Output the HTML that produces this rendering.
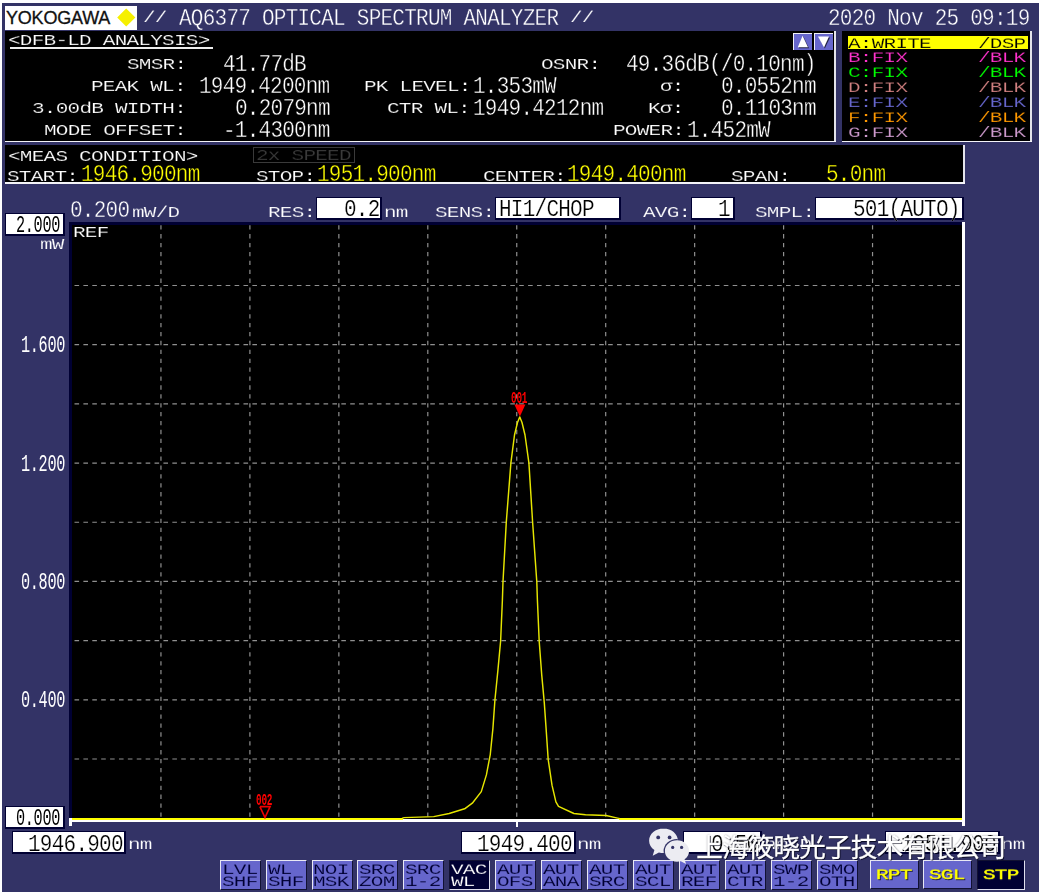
<!DOCTYPE html>
<html><head><meta charset="utf-8"><title>AQ6377 OPTICAL SPECTRUM ANALYZER</title>
<style>
html,body{margin:0;padding:0;background:#fff;}
#page{position:relative;width:1042px;height:894px;overflow:hidden;background:#fff;font-family:"Liberation Mono",monospace;}
#scr{position:absolute;left:2px;top:3px;width:1037px;height:889px;background:#333366;}
.t{will-change:transform;position:absolute;white-space:pre;line-height:1;font-family:"Liberation Mono",monospace;transform-origin:0 76%;}
.r{position:absolute;}
.bx{position:absolute;box-sizing:border-box;background:#fff;border-style:solid;border-color:#000033;border-width:1.3px 2px 2.4px 1.3px;}
.btn{position:absolute;box-sizing:border-box;background:#6666cc;border-style:solid;border-width:1.5px;border-color:#e8e8f4 #111133 #111133 #e8e8f4;}
.btn.on{background:#000033;border-color:#111133 #e0e0ee #e0e0ee #111133;}
svg{position:absolute;left:0;top:0;}
#wm{position:absolute;white-space:nowrap;font-family:"Liberation Sans","Noto Sans CJK SC",sans-serif;color:#fff;line-height:1;}
#logo{position:absolute;white-space:nowrap;font-family:"Liberation Sans",sans-serif;color:#111;line-height:1;}
</style></head><body>
<div id="page"><div id="scr"></div>
<div class="r" style="left:5px;top:5.5px;width:132px;height:24.0px;background:#fff;"></div>
<div id="logo" style="left:6.0px;top:9.4px;font-size:18px;letter-spacing:-0.2px;transform:scaleY(1.07);transform-origin:0 84.6%;-webkit-text-stroke:0.3px #111;">YOKOGAWA</div>
<svg width="1042" height="894" viewBox="0 0 1042 894"><polygon points="117.2,17.5 126.2,8.6 135.4,17.5 126.2,26.4" fill="#f6f000"/></svg>
<span class="t" style="left:143.22px;top:6.34px;font-size:21.00px;letter-spacing:-0.750px;transform:scaleY(0.7648);color:#fff;-webkit-text-stroke:0.2px #333366;">//</span>
<span class="t" style="left:178.77px;top:9.04px;font-size:21.00px;letter-spacing:-0.750px;transform:scaleY(1.1544);color:#fff;-webkit-text-stroke:0.35px #333366;">AQ6377 OPTICAL SPECTRUM ANALYZER</span>
<span class="t" style="left:569.82px;top:6.34px;font-size:21.00px;letter-spacing:-0.750px;transform:scaleY(0.7648);color:#fff;-webkit-text-stroke:0.2px #333366;">//</span>
<span class="t" style="left:828.42px;top:9.04px;font-size:21.00px;letter-spacing:-0.750px;transform:scaleY(1.1544);color:#fff;-webkit-text-stroke:0.35px #333366;">2020 Nov 25 09:19</span>
<div class="r" style="left:5px;top:31.1px;width:829.3px;height:109.70000000000002px;background:#000;"></div>
<div class="r" style="left:834.3px;top:31.1px;width:1.7000000000000455px;height:111.20000000000002px;background:#e4e4ea;"></div>
<div class="r" style="left:5px;top:140.8px;width:831px;height:1.5px;background:#f4f4f8;"></div>
<span class="t" style="left:7.97px;top:29.04px;font-size:21.00px;letter-spacing:-0.750px;transform:scaleY(0.7648);color:#fff;-webkit-text-stroke:0.2px #000;">&lt;DFB-LD ANALYSIS&gt;</span>
<div class="r" style="left:9.5px;top:47.1px;width:203.5px;height:1.6000000000000014px;background:#eeeeee;"></div>
<span class="t" style="left:126.78px;top:53.04px;font-size:21.00px;letter-spacing:-0.750px;transform:scaleY(0.7648);color:#fff;-webkit-text-stroke:0.2px #000;">SMSR:</span>
<span class="t" style="left:91.23px;top:75.14px;font-size:21.00px;letter-spacing:-0.750px;transform:scaleY(0.7648);color:#fff;-webkit-text-stroke:0.2px #000;">PEAK WL:</span>
<span class="t" style="left:31.98px;top:97.24px;font-size:21.00px;letter-spacing:-0.750px;transform:scaleY(0.7648);color:#fff;-webkit-text-stroke:0.2px #000;">3.00dB WIDTH:</span>
<span class="t" style="left:43.83px;top:119.34px;font-size:21.00px;letter-spacing:-0.750px;transform:scaleY(0.7648);color:#fff;-webkit-text-stroke:0.2px #000;">MODE OFFSET:</span>
<span class="t" style="left:223.07px;top:54.54px;font-size:21.00px;letter-spacing:-0.750px;transform:scaleY(1.1544);color:#fff;-webkit-text-stroke:0.35px #000;">41.77dB</span>
<span class="t" style="left:199.38px;top:76.64px;font-size:21.00px;letter-spacing:-0.750px;transform:scaleY(1.1544);color:#fff;-webkit-text-stroke:0.35px #000;">1949.4200nm</span>
<span class="t" style="left:234.93px;top:98.74px;font-size:21.00px;letter-spacing:-0.750px;transform:scaleY(1.1544);color:#fff;-webkit-text-stroke:0.35px #000;">0.2079nm</span>
<span class="t" style="left:223.07px;top:120.84px;font-size:21.00px;letter-spacing:-0.750px;transform:scaleY(1.1544);color:#fff;-webkit-text-stroke:0.35px #000;">-1.4300nm</span>
<span class="t" style="left:363.58px;top:75.14px;font-size:21.00px;letter-spacing:-0.750px;transform:scaleY(0.7648);color:#fff;-webkit-text-stroke:0.2px #000;">PK LEVEL:</span>
<span class="t" style="left:387.28px;top:97.24px;font-size:21.00px;letter-spacing:-0.750px;transform:scaleY(0.7648);color:#fff;-webkit-text-stroke:0.2px #000;">CTR WL:</span>
<span class="t" style="left:472.62px;top:76.64px;font-size:21.00px;letter-spacing:-0.750px;transform:scaleY(1.1544);color:#fff;-webkit-text-stroke:0.35px #000;">1.353mW</span>
<span class="t" style="left:472.62px;top:98.74px;font-size:21.00px;letter-spacing:-0.750px;transform:scaleY(1.1544);color:#fff;-webkit-text-stroke:0.35px #000;">1949.4212nm</span>
<span class="t" style="left:541.23px;top:53.04px;font-size:21.00px;letter-spacing:-0.750px;transform:scaleY(0.7648);color:#fff;-webkit-text-stroke:0.2px #000;">OSNR:</span>
<span class="t" style="left:626.23px;top:54.54px;font-size:21.00px;letter-spacing:-0.750px;transform:scaleY(1.1544);color:#fff;-webkit-text-stroke:0.35px #000;">49.36dB(/0.10nm)</span>
<span class="t" style="left:660.02px;top:75.14px;font-size:21.00px;letter-spacing:-0.750px;transform:scaleY(0.7648);color:#fff;-webkit-text-stroke:0.2px #000;">σ:</span>
<span class="t" style="left:648.18px;top:97.24px;font-size:21.00px;letter-spacing:-0.750px;transform:scaleY(0.7648);color:#fff;-webkit-text-stroke:0.2px #000;">Kσ:</span>
<span class="t" style="left:612.62px;top:119.34px;font-size:21.00px;letter-spacing:-0.750px;transform:scaleY(0.7648);color:#fff;-webkit-text-stroke:0.2px #000;">POWER:</span>
<span class="t" style="left:720.62px;top:76.64px;font-size:21.00px;letter-spacing:-0.750px;transform:scaleY(1.1544);color:#fff;-webkit-text-stroke:0.35px #000;">0.0552nm</span>
<span class="t" style="left:720.62px;top:98.74px;font-size:21.00px;letter-spacing:-0.750px;transform:scaleY(1.1544);color:#fff;-webkit-text-stroke:0.35px #000;">0.1103nm</span>
<span class="t" style="left:687.12px;top:120.84px;font-size:21.00px;letter-spacing:-0.750px;transform:scaleY(1.1544);color:#fff;-webkit-text-stroke:0.35px #000;">1.452mW</span>
<div class="btn" style="left:793.4px;top:33px;width:18.8px;height:17.3px;border-width:1.3px 0 0 1.3px;border-color:#f0f0f8"></div>
<div class="btn" style="left:814px;top:33px;width:19.1px;height:17.3px;border-width:1.3px 0 0 1.3px;border-color:#f0f0f8"></div>
<svg width="1042" height="894" viewBox="0 0 1042 894"><polygon points="803.4,36.6 809,48.2 798.8,48.2" fill="#222244"/><polygon points="802.6,35.7 808,47.3 797.8,47.3" fill="#fff"/><polygon points="819,37.4 830,37.4 824.8,48.4" fill="#222244"/><polygon points="818,36.5 829,36.5 824,47.6" fill="#fff"/></svg>
<div class="r" style="left:841.7px;top:31.1px;width:188.5999999999999px;height:109.70000000000002px;background:#000;"></div>
<div class="r" style="left:1030.3px;top:31.1px;width:1.6000000000001364px;height:111.20000000000002px;background:#e4e4ea;"></div>
<div class="r" style="left:841.7px;top:140.8px;width:190.20000000000005px;height:1.5px;background:#f4f4f8;"></div>
<div class="r" style="left:848px;top:36px;width:180px;height:12.899999999999999px;background:#ffff00;"></div>
<span class="t" style="left:847.83px;top:31.94px;font-size:21.00px;letter-spacing:-0.750px;transform:scaleY(0.7287);color:#000;-webkit-text-stroke:0.2px #ffff00;">A:WRITE</span>
<span class="t" style="left:977.92px;top:31.94px;font-size:21.00px;letter-spacing:-0.750px;transform:scaleY(0.7287);color:#000;-webkit-text-stroke:0.2px #ffff00;">/DSP</span>
<span class="t" style="left:847.83px;top:46.14px;font-size:21.00px;letter-spacing:-0.750px;transform:scaleY(0.7287);color:#ff33cc;-webkit-text-stroke:0.2px #000;">B:FIX</span>
<span class="t" style="left:977.92px;top:46.14px;font-size:21.00px;letter-spacing:-0.750px;transform:scaleY(0.7287);color:#ff33cc;-webkit-text-stroke:0.2px #000;">/BLK</span>
<span class="t" style="left:847.83px;top:61.09px;font-size:21.00px;letter-spacing:-0.750px;transform:scaleY(0.7287);color:#00ff00;-webkit-text-stroke:0.2px #000;">C:FIX</span>
<span class="t" style="left:977.92px;top:61.09px;font-size:21.00px;letter-spacing:-0.750px;transform:scaleY(0.7287);color:#00ff00;-webkit-text-stroke:0.2px #000;">/BLK</span>
<span class="t" style="left:847.83px;top:76.04px;font-size:21.00px;letter-spacing:-0.750px;transform:scaleY(0.7287);color:#d08080;-webkit-text-stroke:0.2px #000;">D:FIX</span>
<span class="t" style="left:977.92px;top:76.04px;font-size:21.00px;letter-spacing:-0.750px;transform:scaleY(0.7287);color:#d08080;-webkit-text-stroke:0.2px #000;">/BLK</span>
<span class="t" style="left:847.83px;top:90.94px;font-size:21.00px;letter-spacing:-0.750px;transform:scaleY(0.7287);color:#6666cc;-webkit-text-stroke:0.2px #000;">E:FIX</span>
<span class="t" style="left:977.92px;top:90.94px;font-size:21.00px;letter-spacing:-0.750px;transform:scaleY(0.7287);color:#6666cc;-webkit-text-stroke:0.2px #000;">/BLK</span>
<span class="t" style="left:847.83px;top:105.89px;font-size:21.00px;letter-spacing:-0.750px;transform:scaleY(0.7287);color:#ff9900;-webkit-text-stroke:0.2px #000;">F:FIX</span>
<span class="t" style="left:977.92px;top:105.89px;font-size:21.00px;letter-spacing:-0.750px;transform:scaleY(0.7287);color:#ff9900;-webkit-text-stroke:0.2px #000;">/BLK</span>
<span class="t" style="left:847.83px;top:120.84px;font-size:21.00px;letter-spacing:-0.750px;transform:scaleY(0.7287);color:#cc99cc;-webkit-text-stroke:0.2px #000;">G:FIX</span>
<span class="t" style="left:977.92px;top:120.84px;font-size:21.00px;letter-spacing:-0.750px;transform:scaleY(0.7287);color:#cc99cc;-webkit-text-stroke:0.2px #000;">/BLK</span>
<div class="r" style="left:5px;top:145.1px;width:958.1px;height:36.900000000000006px;background:#000;"></div>
<div class="r" style="left:963.1px;top:145.1px;width:1.7999999999999545px;height:38.5px;background:#e4e4ea;"></div>
<div class="r" style="left:5px;top:182px;width:959.9px;height:1.5999999999999943px;background:#f4f4f8;"></div>
<span class="t" style="left:7.97px;top:144.64px;font-size:21.00px;letter-spacing:-0.750px;transform:scaleY(0.7648);color:#fff;-webkit-text-stroke:0.2px #000;">&lt;MEAS CONDITION&gt;</span>
<div class="r" style="left:253px;top:147px;width:102px;height:16px;box-sizing:border-box;border:1.2px solid #3a3a3a;"></div>
<span class="t" style="left:256.02px;top:144.34px;font-size:21.00px;letter-spacing:-0.750px;transform:scaleY(0.7648);color:#3a3a3a;-webkit-text-stroke:0.2px #000;">2x SPEED</span>
<span class="t" style="left:7.47px;top:165.04px;font-size:21.00px;letter-spacing:-0.750px;transform:scaleY(0.7648);color:#fff;-webkit-text-stroke:0.2px #000;">START:</span>
<span class="t" style="left:81.03px;top:165.34px;font-size:21.00px;letter-spacing:-0.750px;transform:scaleY(1.1544);color:#ffff00;-webkit-text-stroke:0.35px #000;">1946.900nm</span>
<span class="t" style="left:256.23px;top:165.04px;font-size:21.00px;letter-spacing:-0.750px;transform:scaleY(0.7648);color:#fff;-webkit-text-stroke:0.2px #000;">STOP:</span>
<span class="t" style="left:317.02px;top:165.34px;font-size:21.00px;letter-spacing:-0.750px;transform:scaleY(1.1544);color:#ffff00;-webkit-text-stroke:0.35px #000;">1951.900nm</span>
<span class="t" style="left:482.73px;top:165.04px;font-size:21.00px;letter-spacing:-0.750px;transform:scaleY(0.7648);color:#fff;-webkit-text-stroke:0.2px #000;">CENTER:</span>
<span class="t" style="left:566.52px;top:165.34px;font-size:21.00px;letter-spacing:-0.750px;transform:scaleY(1.1544);color:#ffff00;-webkit-text-stroke:0.35px #000;">1949.400nm</span>
<span class="t" style="left:730.73px;top:165.04px;font-size:21.00px;letter-spacing:-0.750px;transform:scaleY(0.7648);color:#fff;-webkit-text-stroke:0.2px #000;">SPAN:</span>
<span class="t" style="left:826.27px;top:165.34px;font-size:21.00px;letter-spacing:-0.750px;transform:scaleY(1.1544);color:#ffff00;-webkit-text-stroke:0.35px #000;">5.0nm</span>
<span class="t" style="left:70.22px;top:201.04px;font-size:21.00px;letter-spacing:-0.750px;transform:scaleY(1.1544);color:#fff;-webkit-text-stroke:0.35px #333366;">0.200</span>
<span class="t" style="left:131.62px;top:201.04px;font-size:21.00px;letter-spacing:-0.750px;transform:scaleY(0.7648);color:#fff;-webkit-text-stroke:0.2px #333366;">mW/D</span>
<span class="t" style="left:267.73px;top:200.54px;font-size:21.00px;letter-spacing:-0.750px;transform:scaleY(0.7648);color:#fff;-webkit-text-stroke:0.2px #333366;">RES:</span>
<div class="bx" style="left:316px;top:197.2px;width:66.39999999999998px;height:23.0px"></div>
<span class="t" style="left:344.48px;top:200.04px;font-size:21.00px;letter-spacing:-0.750px;transform:scaleY(1.1544);color:#000;-webkit-text-stroke:0.2px #fff;">0.2</span>
<span class="t" style="left:383.73px;top:200.54px;font-size:21.00px;letter-spacing:-0.750px;transform:scaleY(0.7648);color:#fff;-webkit-text-stroke:0.2px #333366;">nm</span>
<span class="t" style="left:434.73px;top:200.54px;font-size:21.00px;letter-spacing:-0.750px;transform:scaleY(0.7648);color:#fff;-webkit-text-stroke:0.2px #333366;">SENS:</span>
<div class="bx" style="left:495.3px;top:197.2px;width:125.69999999999999px;height:23.0px"></div>
<span class="t" style="left:498.73px;top:200.04px;font-size:21.00px;letter-spacing:-0.750px;transform:scaleY(1.1544);color:#000;-webkit-text-stroke:0.2px #fff;">HI1/CHOP</span>
<span class="t" style="left:642.73px;top:200.54px;font-size:21.00px;letter-spacing:-0.750px;transform:scaleY(0.7648);color:#fff;-webkit-text-stroke:0.2px #333366;">AVG:</span>
<div class="bx" style="left:691px;top:197.2px;width:43.5px;height:23.0px"></div>
<span class="t" style="left:718.27px;top:200.04px;font-size:21.00px;letter-spacing:-0.750px;transform:scaleY(1.1544);color:#000;-webkit-text-stroke:0.2px #fff;">1</span>
<span class="t" style="left:754.73px;top:200.54px;font-size:21.00px;letter-spacing:-0.750px;transform:scaleY(0.7648);color:#fff;-webkit-text-stroke:0.2px #333366;">SMPL:</span>
<div class="bx" style="left:815px;top:197.2px;width:149.29999999999995px;height:23.0px"></div>
<span class="t" style="left:853.02px;top:200.04px;font-size:21.00px;letter-spacing:-0.750px;transform:scaleY(1.1544);color:#000;-webkit-text-stroke:0.2px #fff;">501(AUTO)</span>
<div class="r" style="left:68.7px;top:222.2px;width:896.1999999999999px;height:600.0999999999999px;background:#000033;"></div>
<div class="r" style="left:71.5px;top:225.1px;width:890.5px;height:593.9px;background:#000;"></div>
<div class="r" style="left:962px;top:222.2px;width:2.8999999999999773px;height:604.3px;background:#fff;"></div>
<div class="r" style="left:68.8px;top:819.2px;width:896.1px;height:3.199999999999932px;background:#fff;"></div>
<div class="r" style="left:71.8px;top:817.8px;width:331.2px;height:2.300000000000068px;background:#ffff00;"></div>
<div class="r" style="left:619px;top:817.8px;width:343px;height:2.300000000000068px;background:#ffff00;"></div>
<div class="r" style="left:68.8px;top:818.4px;width:3.0px;height:8.100000000000023px;background:#fff;"></div>
<div class="r" style="left:516.2px;top:822px;width:1.7999999999999545px;height:5px;background:#fff;"></div>
<svg width="1042" height="894" viewBox="0 0 1042 894"><line x1="160.95" y1="225.2" x2="160.95" y2="818" stroke="#909090" stroke-width="1.2" stroke-dasharray="4.3 4.597"/><line x1="249.90" y1="225.2" x2="249.90" y2="818" stroke="#909090" stroke-width="1.2" stroke-dasharray="4.3 4.597"/><line x1="338.85" y1="225.2" x2="338.85" y2="818" stroke="#909090" stroke-width="1.2" stroke-dasharray="4.3 4.597"/><line x1="427.80" y1="225.2" x2="427.80" y2="818" stroke="#909090" stroke-width="1.2" stroke-dasharray="4.3 4.597"/><line x1="516.75" y1="225.2" x2="516.75" y2="818" stroke="#909090" stroke-width="1.2" stroke-dasharray="4.3 4.597"/><line x1="605.70" y1="225.2" x2="605.70" y2="818" stroke="#909090" stroke-width="1.2" stroke-dasharray="4.3 4.597"/><line x1="694.65" y1="225.2" x2="694.65" y2="818" stroke="#909090" stroke-width="1.2" stroke-dasharray="4.3 4.597"/><line x1="783.60" y1="225.2" x2="783.60" y2="818" stroke="#909090" stroke-width="1.2" stroke-dasharray="4.3 4.597"/><line x1="872.55" y1="225.2" x2="872.55" y2="818" stroke="#909090" stroke-width="1.2" stroke-dasharray="4.3 4.597"/><line x1="74.5" y1="285.49" x2="960.50" y2="285.49" stroke="#909090" stroke-width="1.2" stroke-dasharray="4.6 4.294"/><line x1="74.5" y1="344.68" x2="960.50" y2="344.68" stroke="#909090" stroke-width="1.2" stroke-dasharray="4.6 4.294"/><line x1="74.5" y1="403.87" x2="960.50" y2="403.87" stroke="#909090" stroke-width="1.2" stroke-dasharray="4.6 4.294"/><line x1="74.5" y1="463.06" x2="960.50" y2="463.06" stroke="#909090" stroke-width="1.2" stroke-dasharray="4.6 4.294"/><line x1="74.5" y1="522.25" x2="960.50" y2="522.25" stroke="#909090" stroke-width="1.2" stroke-dasharray="4.6 4.294"/><line x1="74.5" y1="581.44" x2="960.50" y2="581.44" stroke="#909090" stroke-width="1.2" stroke-dasharray="4.6 4.294"/><line x1="74.5" y1="640.63" x2="960.50" y2="640.63" stroke="#909090" stroke-width="1.2" stroke-dasharray="4.6 4.294"/><line x1="74.5" y1="699.82" x2="960.50" y2="699.82" stroke="#909090" stroke-width="1.2" stroke-dasharray="4.6 4.294"/><line x1="74.5" y1="759.01" x2="960.50" y2="759.01" stroke="#909090" stroke-width="1.2" stroke-dasharray="4.6 4.294"/><polyline points="402,818.4 404.1,817.6 433.7,816.6 449.2,813.5 464.6,808.8 472.3,803.2 481.3,791.6 486.4,774.9 490.3,754.3 492.9,728.6 494.9,700.3 498,669.4 500.6,641.2 502.4,600 503,581.8 506.3,522 510.9,462.9 514.5,435 517.5,422.5 519.8,416.9 522,422.5 525,435 528.9,462.9 532.6,522 536.8,581.8 537.4,600 539.2,641.2 541.7,674.6 544.3,702.9 546.1,728.6 548.2,759.5 552,785.2 555.9,801.9 558.5,806.3 573.9,813.5 585.5,814.8 606,815.5 617.6,818.1 620,818.6" fill="none" stroke="#e6e600" stroke-width="1.45" stroke-linejoin="round"/><polygon points="514.4,404.6 525.4,404.6 519.9,416.6" fill="#ff0000"/><polyline points="259.9,806.6 270.1,806.6 265,817.6 259.9,806.6" fill="none" stroke="#ee0000" stroke-width="1.6"/></svg>
<span class="t" style="left:510.68px;top:396.06px;font-size:9.40px;letter-spacing:-0.240px;transform:scaleY(1.7086);color:#ff0000;font-weight:bold;">001</span>
<span class="t" style="left:256.28px;top:797.86px;font-size:9.40px;letter-spacing:-0.240px;transform:scaleY(1.7086);color:#ff0000;font-weight:bold;">002</span>
<span class="t" style="left:73.12px;top:221.24px;font-size:21.00px;letter-spacing:-0.750px;transform:scaleY(0.7648);color:#fff;-webkit-text-stroke:0.2px #000;">REF</span>
<div class="bx" style="left:5.2px;top:213.3px;width:60.099999999999994px;height:22.899999999999977px"></div>
<span class="t" style="left:15.74px;top:220.85px;font-size:15.20px;letter-spacing:-0.320px;transform:scaleY(1.5949);color:#000;">2.000</span>
<span class="t" style="left:40.42px;top:233.34px;font-size:21.00px;letter-spacing:-0.750px;transform:scaleY(0.7648);color:#fff;-webkit-text-stroke:0.2px #333366;">mW</span>
<span class="t" style="left:21.14px;top:341.13px;font-size:15.20px;letter-spacing:-0.320px;transform:scaleY(1.5949);color:#fff;">1.600</span>
<span class="t" style="left:21.14px;top:459.51px;font-size:15.20px;letter-spacing:-0.320px;transform:scaleY(1.5949);color:#fff;">1.200</span>
<span class="t" style="left:21.14px;top:577.89px;font-size:15.20px;letter-spacing:-0.320px;transform:scaleY(1.5949);color:#fff;">0.800</span>
<span class="t" style="left:21.14px;top:696.27px;font-size:15.20px;letter-spacing:-0.320px;transform:scaleY(1.5949);color:#fff;">0.400</span>
<div class="bx" style="left:5.2px;top:806.1px;width:60.099999999999994px;height:23.100000000000023px"></div>
<span class="t" style="left:15.74px;top:813.65px;font-size:15.20px;letter-spacing:-0.320px;transform:scaleY(1.5949);color:#000;">0.000</span>
<div class="bx" style="left:12.4px;top:831.4px;width:114.0px;height:23.0px"></div>
<span class="t" style="left:28.23px;top:834.54px;font-size:21.00px;letter-spacing:-0.750px;transform:scaleY(1.1544);color:#000;-webkit-text-stroke:0.2px #fff;">1946.900</span>
<span class="t" style="left:127.72px;top:833.34px;font-size:21.00px;letter-spacing:-0.750px;transform:scaleY(0.7648);color:#fff;-webkit-text-stroke:0.2px #333366;">nm</span>
<div class="bx" style="left:461px;top:831.4px;width:115px;height:23.0px"></div>
<span class="t" style="left:477.23px;top:834.54px;font-size:21.00px;letter-spacing:-0.750px;transform:scaleY(1.1544);color:#000;-webkit-text-stroke:0.2px #fff;">1949.400</span>
<span class="t" style="left:577.23px;top:833.34px;font-size:21.00px;letter-spacing:-0.750px;transform:scaleY(0.7648);color:#fff;-webkit-text-stroke:0.2px #333366;">nm</span>
<div class="bx" style="left:683px;top:831.4px;width:79px;height:23.0px"></div>
<span class="t" style="left:710.62px;top:834.54px;font-size:21.00px;letter-spacing:-0.750px;transform:scaleY(1.1544);color:#000;-webkit-text-stroke:0.2px #fff;">0.50</span>
<span class="t" style="left:763.62px;top:833.34px;font-size:21.00px;letter-spacing:-0.750px;transform:scaleY(0.7648);color:#fff;-webkit-text-stroke:0.2px #333366;">nm/D</span>
<div class="bx" style="left:885px;top:831.4px;width:114.60000000000002px;height:23.0px"></div>
<span class="t" style="left:901.23px;top:834.54px;font-size:21.00px;letter-spacing:-0.750px;transform:scaleY(1.1544);color:#000;-webkit-text-stroke:0.2px #fff;">1951.900</span>
<span class="t" style="left:1001.12px;top:833.34px;font-size:21.00px;letter-spacing:-0.750px;transform:scaleY(0.7648);color:#fff;-webkit-text-stroke:0.2px #333366;">nm</span>
<div class="btn" style="left:219.6px;top:859.5px;width:41px;height:30px"></div>
<span class="t" style="left:221.62px;top:857.84px;font-size:21.00px;letter-spacing:-0.750px;transform:scaleY(0.7287);color:#000033;-webkit-text-stroke:0.2px #6666cc;">LVL</span>
<span class="t" style="left:221.62px;top:870.24px;font-size:21.00px;letter-spacing:-0.750px;transform:scaleY(0.7287);color:#000033;-webkit-text-stroke:0.2px #6666cc;">SHF</span>
<div class="btn" style="left:265.5px;top:859.5px;width:41px;height:30px"></div>
<span class="t" style="left:267.55px;top:857.84px;font-size:21.00px;letter-spacing:-0.750px;transform:scaleY(0.7287);color:#000033;-webkit-text-stroke:0.2px #6666cc;">WL</span>
<span class="t" style="left:267.55px;top:870.24px;font-size:21.00px;letter-spacing:-0.750px;transform:scaleY(0.7287);color:#000033;-webkit-text-stroke:0.2px #6666cc;">SHF</span>
<div class="btn" style="left:311.5px;top:859.5px;width:41px;height:30px"></div>
<span class="t" style="left:313.48px;top:857.84px;font-size:21.00px;letter-spacing:-0.750px;transform:scaleY(0.7287);color:#000033;-webkit-text-stroke:0.2px #6666cc;">NOI</span>
<span class="t" style="left:313.48px;top:870.24px;font-size:21.00px;letter-spacing:-0.750px;transform:scaleY(0.7287);color:#000033;-webkit-text-stroke:0.2px #6666cc;">MSK</span>
<div class="btn" style="left:357.4px;top:859.5px;width:41px;height:30px"></div>
<span class="t" style="left:359.41px;top:857.84px;font-size:21.00px;letter-spacing:-0.750px;transform:scaleY(0.7287);color:#000033;-webkit-text-stroke:0.2px #6666cc;">SRC</span>
<span class="t" style="left:359.41px;top:870.24px;font-size:21.00px;letter-spacing:-0.750px;transform:scaleY(0.7287);color:#000033;-webkit-text-stroke:0.2px #6666cc;">ZOM</span>
<div class="btn" style="left:403.3px;top:859.5px;width:41px;height:30px"></div>
<span class="t" style="left:405.34px;top:857.84px;font-size:21.00px;letter-spacing:-0.750px;transform:scaleY(0.7287);color:#000033;-webkit-text-stroke:0.2px #6666cc;">SRC</span>
<span class="t" style="left:405.34px;top:870.24px;font-size:21.00px;letter-spacing:-0.750px;transform:scaleY(0.7287);color:#000033;-webkit-text-stroke:0.2px #6666cc;">1-2</span>
<div class="btn on" style="left:449.2px;top:859.5px;width:41px;height:30.4px"></div>
<span class="t" style="left:451.27px;top:857.84px;font-size:21.00px;letter-spacing:-0.750px;transform:scaleY(0.7287);color:#fff;-webkit-text-stroke:0.2px #000033;">VAC</span>
<span class="t" style="left:451.27px;top:870.24px;font-size:21.00px;letter-spacing:-0.750px;transform:scaleY(0.7287);color:#fff;-webkit-text-stroke:0.2px #000033;">WL</span>
<div class="btn" style="left:495.2px;top:859.5px;width:41px;height:30px"></div>
<span class="t" style="left:497.20px;top:857.84px;font-size:21.00px;letter-spacing:-0.750px;transform:scaleY(0.7287);color:#000033;-webkit-text-stroke:0.2px #6666cc;">AUT</span>
<span class="t" style="left:497.20px;top:870.24px;font-size:21.00px;letter-spacing:-0.750px;transform:scaleY(0.7287);color:#000033;-webkit-text-stroke:0.2px #6666cc;">OFS</span>
<div class="btn" style="left:541.1px;top:859.5px;width:41px;height:30px"></div>
<span class="t" style="left:543.13px;top:857.84px;font-size:21.00px;letter-spacing:-0.750px;transform:scaleY(0.7287);color:#000033;-webkit-text-stroke:0.2px #6666cc;">AUT</span>
<span class="t" style="left:543.13px;top:870.24px;font-size:21.00px;letter-spacing:-0.750px;transform:scaleY(0.7287);color:#000033;-webkit-text-stroke:0.2px #6666cc;">ANA</span>
<div class="btn" style="left:587.0px;top:859.5px;width:41px;height:30px"></div>
<span class="t" style="left:589.06px;top:857.84px;font-size:21.00px;letter-spacing:-0.750px;transform:scaleY(0.7287);color:#000033;-webkit-text-stroke:0.2px #6666cc;">AUT</span>
<span class="t" style="left:589.06px;top:870.24px;font-size:21.00px;letter-spacing:-0.750px;transform:scaleY(0.7287);color:#000033;-webkit-text-stroke:0.2px #6666cc;">SRC</span>
<div class="btn" style="left:633.0px;top:859.5px;width:41px;height:30px"></div>
<span class="t" style="left:635.00px;top:857.84px;font-size:21.00px;letter-spacing:-0.750px;transform:scaleY(0.7287);color:#000033;-webkit-text-stroke:0.2px #6666cc;">AUT</span>
<span class="t" style="left:635.00px;top:870.24px;font-size:21.00px;letter-spacing:-0.750px;transform:scaleY(0.7287);color:#000033;-webkit-text-stroke:0.2px #6666cc;">SCL</span>
<div class="btn" style="left:678.9px;top:859.5px;width:41px;height:30px"></div>
<span class="t" style="left:680.92px;top:857.84px;font-size:21.00px;letter-spacing:-0.750px;transform:scaleY(0.7287);color:#000033;-webkit-text-stroke:0.2px #6666cc;">AUT</span>
<span class="t" style="left:680.92px;top:870.24px;font-size:21.00px;letter-spacing:-0.750px;transform:scaleY(0.7287);color:#000033;-webkit-text-stroke:0.2px #6666cc;">REF</span>
<div class="btn" style="left:724.8px;top:859.5px;width:41px;height:30px"></div>
<span class="t" style="left:726.86px;top:857.84px;font-size:21.00px;letter-spacing:-0.750px;transform:scaleY(0.7287);color:#000033;-webkit-text-stroke:0.2px #6666cc;">AUT</span>
<span class="t" style="left:726.86px;top:870.24px;font-size:21.00px;letter-spacing:-0.750px;transform:scaleY(0.7287);color:#000033;-webkit-text-stroke:0.2px #6666cc;">CTR</span>
<div class="btn" style="left:770.8px;top:859.5px;width:41px;height:30px"></div>
<span class="t" style="left:772.78px;top:857.84px;font-size:21.00px;letter-spacing:-0.750px;transform:scaleY(0.7287);color:#000033;-webkit-text-stroke:0.2px #6666cc;">SWP</span>
<span class="t" style="left:772.78px;top:870.24px;font-size:21.00px;letter-spacing:-0.750px;transform:scaleY(0.7287);color:#000033;-webkit-text-stroke:0.2px #6666cc;">1-2</span>
<div class="btn" style="left:816.7px;top:859.5px;width:41px;height:30px"></div>
<span class="t" style="left:818.72px;top:857.84px;font-size:21.00px;letter-spacing:-0.750px;transform:scaleY(0.7287);color:#000033;-webkit-text-stroke:0.2px #6666cc;">SMO</span>
<span class="t" style="left:818.72px;top:870.24px;font-size:21.00px;letter-spacing:-0.750px;transform:scaleY(0.7287);color:#000033;-webkit-text-stroke:0.2px #6666cc;">OTH</span>
<div class="btn" style="left:870.0px;top:859.5px;width:48.6px;height:29.6px"></div>
<span class="t" style="left:876.52px;top:864.04px;font-size:21.00px;letter-spacing:-0.750px;transform:scaleY(0.7287);color:#222244;-webkit-text-stroke:0.45px #222244;">RPT</span>
<span class="t" style="left:875.83px;top:863.34px;font-size:21.00px;letter-spacing:-0.750px;transform:scaleY(0.7287);color:#ffff00;-webkit-text-stroke:0.45px #ffff00;">RPT</span>
<div class="btn" style="left:923.0px;top:859.5px;width:48.6px;height:29.6px"></div>
<span class="t" style="left:929.52px;top:864.04px;font-size:21.00px;letter-spacing:-0.750px;transform:scaleY(0.7287);color:#222244;-webkit-text-stroke:0.45px #222244;">SGL</span>
<span class="t" style="left:928.83px;top:863.34px;font-size:21.00px;letter-spacing:-0.750px;transform:scaleY(0.7287);color:#ffff00;-webkit-text-stroke:0.45px #ffff00;">SGL</span>
<div class="btn on" style="left:976.8px;top:859.5px;width:48.6px;height:30.6px"></div>
<span class="t" style="left:983.32px;top:864.04px;font-size:21.00px;letter-spacing:-0.750px;transform:scaleY(0.7287);color:#222244;-webkit-text-stroke:0.45px #222244;">STP</span>
<span class="t" style="left:982.62px;top:863.34px;font-size:21.00px;letter-spacing:-0.750px;transform:scaleY(0.7287);color:#ffff00;-webkit-text-stroke:0.45px #ffff00;">STP</span>
<svg width="1042" height="894" viewBox="0 0 1042 894"><g fill="#ececf2"><path d="M663.5 828.6c-8 0-14.4 5.4-14.4 12.1 0 3.8 2 7.1 5.300 9.400l-1.7 5.700 6.200-3.400c1.500 0.400 3 0.600 4.600 0.600 8 0 14.400-5.500 14.400-12.200s-6.400-12.200-14.400-12.200z"/></g><clipPath id="bb"><path d="M663.5 828.6c-8 0-14.4 5.4-14.4 12.1 0 3.8 2 7.1 5.300 9.400l-1.7 5.700 6.200-3.400c1.500 0.400 3 0.600 4.600 0.600 8 0 14.400-5.500 14.400-12.200s-6.400-12.200-14.400-12.200z"/></clipPath><g fill="#333366"><circle cx="658.2" cy="837.4" r="1.9"/><circle cx="669.6" cy="837.4" r="1.9"/><ellipse cx="677" cy="851" rx="13.4" ry="12.1" clip-path="url(#bb)"/></g><g fill="#ececf2"><path d="M677 840.300c-6.700 0-12.100 4.800-12.100 10.700s5.400 10.700 12.100 10.700c1.300 0 2.600-0.200 3.800-0.500l5.200 2.800-1.400-4.700c2.700-2 4.500-4.900 4.500-8.300 0-5.900-5.400-10.700-12.100-10.700z"/></g><g fill="#333366"><circle cx="672.7" cy="847.4" r="1.6"/><circle cx="681.6" cy="847.4" r="1.6"/></g></svg>
<div id="wm" style="left:696.3px;top:835.2px;font-size:26.6px;letter-spacing:-0.85px;-webkit-text-stroke:0.3px #fff;text-shadow:1px 1px 0 rgba(0,0,20,.75),0 0 2px rgba(0,0,20,.5);">上海筱晓光子技术有限公司</div>
</div></body></html>
